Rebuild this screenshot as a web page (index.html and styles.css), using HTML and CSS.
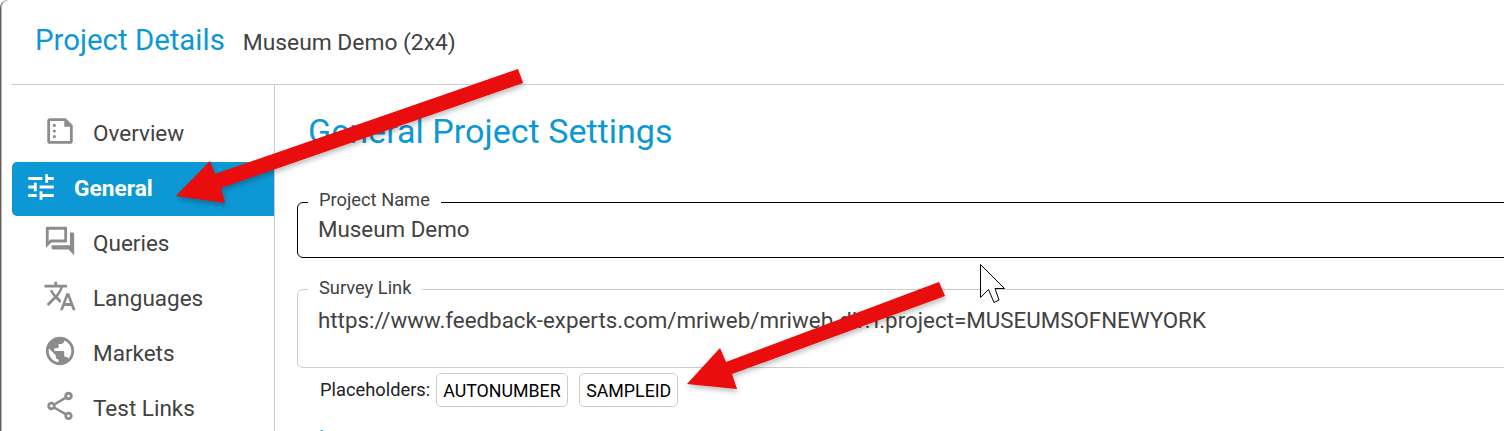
FILE: index.html
```html
<!DOCTYPE html>
<html lang="en">
<head>
<meta charset="utf-8">
<title>Project Details</title>
<link rel="stylesheet" href="styles.css">
</head>
<body>
<div class="window">
  <header class="top">
    <h1 class="top-title">Project Details</h1>
    <span class="top-sub">Museum Demo (2x4)</span>
  </header>
  <div class="body">
    <nav class="side">
      <a class="item first">
        <svg class="ico" viewBox="0 0 24 24"><path d="M5 3h11l5 5v11a2 2 0 0 1-2 2H5a2 2 0 0 1-2-2V5a2 2 0 0 1 2-2zm0 2v14h14V9h-4V5H5z"/><circle cx="8" cy="8" r="1.1"/><circle cx="8" cy="12" r="1.1"/><circle cx="8" cy="16" r="1.1"/></svg>
        <span>Overview</span>
      </a>
      <a class="item active">
        <svg class="ico" viewBox="0 0 24 24"><path d="M3 17v2h6v-2H3zM3 5v2h10V5H3zm10 16v-2h8v-2h-8v-2h-2v6h2zM7 9v2H3v2h4v2h2V9H7zm14 4v-2H11v2h10zm-6-4h2V7h4V5h-4V3h-2v6z"/></svg>
        <span>General</span>
      </a>
      <a class="item">
        <svg class="ico" viewBox="0 0 24 24"><path d="M15 4v7H5.17L4 12.17V4h11m1-2H3a1 1 0 0 0-1 1v14l4-4h10a1 1 0 0 0 1-1V3a1 1 0 0 0-1-1zm5 4h-2v9H6v2a1 1 0 0 0 1 1h11l4 4V7a1 1 0 0 0-1-1z"/></svg>
        <span>Queries</span>
      </a>
      <a class="item">
        <svg class="ico" viewBox="0 0 24 24"><path d="M12.87 15.07l-2.54-2.51.03-.03A17.52 17.52 0 0 0 14.07 6H17V4h-7V2H8v2H1v1.99h11.17C11.5 7.92 10.44 9.75 9 11.35 8.07 10.32 7.3 9.19 6.69 8h-2c.73 1.63 1.73 3.17 2.98 4.56l-5.09 5.02L4 19l5-5 3.11 3.11.76-2.04zM18.5 10h-2L12 22h2l1.12-3h4.75L21 22h2l-4.5-12zm-2.62 7l1.62-4.33L19.12 17h-3.24z"/></svg>
        <span>Languages</span>
      </a>
      <a class="item">
        <svg class="ico" viewBox="0 0 24 24"><path d="M12 2C6.48 2 2 6.48 2 12s4.48 10 10 10 10-4.48 10-10S17.52 2 12 2zm-1 17.93c-3.95-.49-7-3.85-7-7.93 0-.62.08-1.21.21-1.79L9 15v1c0 1.1.9 2 2 2v1.93zm6.9-2.54c-.26-.81-1-1.39-1.9-1.39h-1v-3c0-.55-.45-1-1-1H8v-2h2c.55 0 1-.45 1-1V7h2c1.1 0 2-.9 2-2v-.41c2.93 1.19 5 4.06 5 7.41 0 2.08-.8 3.97-2.1 5.39z"/></svg>
        <span>Markets</span>
      </a>
      <a class="item">
        <svg class="ico" viewBox="0 0 24 24"><path d="M18 16.08c-.76 0-1.44.3-1.96.77L8.91 12.7c.05-.23.09-.46.09-.7s-.04-.47-.09-.7l7.05-4.11c.54.5 1.25.81 2.04.81 1.66 0 3-1.34 3-3s-1.34-3-3-3-3 1.34-3 3c0 .24.04.47.09.7L8.04 9.81C7.5 9.31 6.79 9 6 9c-1.66 0-3 1.34-3 3s1.34 3 3 3c.79 0 1.5-.31 2.04-.81l7.12 4.16c-.05.21-.08.43-.08.65 0 1.61 1.31 2.92 2.92 2.92s2.92-1.31 2.92-2.92-1.31-2.92-2.92-2.92zM18 4c.55 0 1 .45 1 1s-.45 1-1 1-1-.45-1-1 .45-1 1-1zM6 13c-.55 0-1-.45-1-1s.45-1 1-1 1 .45 1 1-.45 1-1 1zm12 7.02c-.55 0-1-.45-1-1s.45-1 1-1 1 .45 1 1-.45 1-1 1z"/></svg>
        <span>Test Links</span>
      </a>
    </nav>
    <main class="main">
      <h2 class="heading">General Project Settings</h2>
      <fieldset class="field focus">
        <legend class="legend">Project Name</legend>
        <div class="value">Museum Demo</div>
      </fieldset>
      <fieldset class="field tall">
        <legend class="legend">Survey Link</legend>
        <div class="value">https://www.feedback-experts.com/mriweb/mriweb.dll?I.project=MUSEUMSOFNEWYORK</div>
      </fieldset>
      <div class="holders">
        <span class="holders-label">Placeholders:</span>
        <span class="chip">AUTONUMBER</span>
        <span class="chip">SAMPLEID</span>
      </div>
      <div class="next">Language</div>
    </main>
  </div>
</div>
<svg class="overlay" viewBox="0 0 1504 431" width="1504" height="431">
  <defs>
    <filter id="sh" x="-10%" y="-20%" width="120%" height="150%">
      <feDropShadow dx="1" dy="3" stdDeviation="2.5" flood-color="#000" flood-opacity=".25"/>
    </filter>
  </defs>
  <polygon filter="url(#sh)" fill="#e90808" points="518,69 523,83 221,188 225,203 176,196 210,161 215,174"/>
  <polygon filter="url(#sh)" fill="#e90808" points="939,282 945,296 732,374 737,389 687,384 720,348 726,362"/>
  <path fill="#fff" stroke="#000" stroke-width="1" d="M980.500 264.500V297.500L988.500 289.500L994 302.500L999 300L995 288.500H1004.500Z"/>
</svg>
</body>
</html>
```
FILE: styles.css
```css
* { box-sizing: border-box; }
html, body { margin: 0; height: 100%; overflow: hidden; background: #fff; }
body { font-family: Roboto, "Liberation Sans", sans-serif; color: #424242; width: 1504px; height: 431px; position: relative; }
.window { height: 431px; border-left: 1px solid #606060; box-shadow: inset 1px 0 #b5b5b5; border-top-left-radius: 8px; padding-left: 11px; overflow: hidden; }
.top { height: 85px; border-bottom: 1px solid #ccc; display: flex; align-items: baseline; padding: 24px 0 0 23px; gap: 18px; }
.top-title { margin: 0; font-size: 29.400px; font-weight: 400; line-height: 32px; color: #0c98d4; }
.top-sub { font-size: 22.800px; line-height: 32px; }
.body { display: flex; }
.side { width: 263px; flex: none; height: 346px; border-right: 1px solid #ccc; padding-top: 21px; }
.item { display: flex; align-items: center; height: 55px; padding: 0 0 2px 31px; gap: 16px; font-size: 22.500px; }
.item.first { height: 56px; padding-bottom: 3px; }
.item.active { height: 54px; background: #0c98d4; color: #fff; font-weight: 700; font-size: 22.700px; padding-left: 12px; gap: 16px; border-top-left-radius: 5px; border-bottom-left-radius: 5px; }
.ico { width: 34px; height: 34px; fill: #8c8c8c; flex: none; margin-top: -3px; }
.active .ico { fill: #fff; }
.main { flex: 1; min-width: 0; padding: 25px 0 0 22px; margin-right: -20px; }
.heading { margin: 0 0 38px 11px; font-size: 34.100px; font-weight: 400; line-height: 42px; color: #0c98d4; }
.field { margin: 0 0 18px; padding: 0 20px; border: 1px solid #ccc; border-radius: 6px; height: 91px; min-width: 0; }
.field.focus { border-color: #000; height: 68px; margin-bottom: 19px; }
.legend { font-size: 18.300px; line-height: 20px; height: 24px; padding: 0 11px; margin-left: -10px; }
.tall .legend { line-height: 22px; }
.value { font-size: 22.350px; line-height: 26px; margin-top: 2px; }
.tall .value { margin-top: 6px; }
.holders { display: flex; align-items: center; gap: 11.500px; margin: -13px 0 0 23px; height: 34px; font-size: 18.300px; }
.holders-label { margin: -2px -5.500px 0 0; color: #212121; }
.chip { height: 34px; border: 1px solid #ccc; border-radius: 5px; padding: 0 6px; display: flex; align-items: center; color: #000; font-size: 17.800px; }
.next { margin: 19px 0 0 22px; font-size: 20px; color: #0c98d4; }
.overlay { position: absolute; left: 0; top: 0; pointer-events: none; }
```
